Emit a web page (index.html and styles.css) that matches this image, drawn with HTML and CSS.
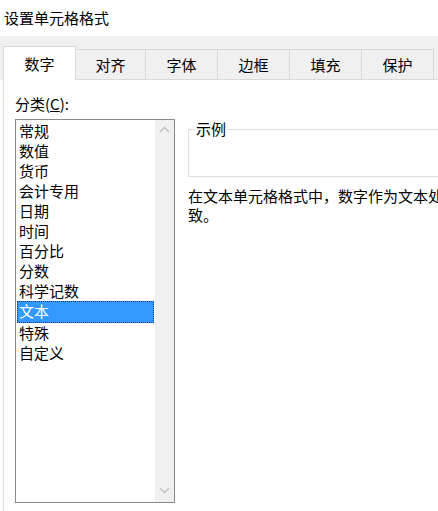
FILE: index.html
```html
<!DOCTYPE html>
<html lang="zh-CN">
<head>
	<meta charset="UTF-8">
	<meta name="viewport" content="width=device-width, initial-scale=1.0">
	<title>设置单元格格式</title>
	<link rel="stylesheet" href="styles.css">
</head>
<body>
	<div class="title-bar">设置单元格格式</div>
	<div class="tab-strip">
		<a href="#" class="tab selected">数字</a>
		<a href="#" class="tab">对齐</a>
		<a href="#" class="tab">字体</a>
		<a href="#" class="tab">边框</a>
		<a href="#" class="tab">填充</a>
		<a href="#" class="tab">保护</a>
		<div class="tab-rest"></div>
	</div>
	<div class="panel">
		<div class="col-left">
			<div class="label">分类(<u>C</u>):</div>
			<div class="listbox">
				<ul class="list-cat">
					<li class="item-cat">常规</li>
					<li class="item-cat">数值</li>
					<li class="item-cat">货币</li>
					<li class="item-cat">会计专用</li>
					<li class="item-cat">日期</li>
					<li class="item-cat">时间</li>
					<li class="item-cat">百分比</li>
					<li class="item-cat">分数</li>
					<li class="item-cat">科学记数</li>
					<li class="item-cat selected">文本</li>
					<li class="item-cat">特殊</li>
					<li class="item-cat">自定义</li>
				</ul>
				<div class="scrollbar">
					<svg class="arrow" width="11" height="7" viewBox="0 0 11 7"><polyline points="1,6 5.5,1.5 10,6" fill="none" stroke="#c4c4c4" stroke-width="1.6"/></svg>
					<svg class="arrow" width="11" height="7" viewBox="0 0 11 7"><polyline points="1,1 5.5,5.5 10,1" fill="none" stroke="#c4c4c4" stroke-width="1.6"/></svg>
				</div>
			</div>
		</div>
		<div class="col-right">
			<fieldset class="sample">
				<legend>示例</legend>
			</fieldset>
			<p class="desc">在文本单元格格式中，数字作为文本处理。单元格显示的内容与输入的内容完全一<br>致。</p>
		</div>
	</div>
</body>
</html>
```

FILE: styles.css
```css
html, body{ margin: 0; padding: 0; overflow: hidden; }
body{
	width: 438px; height: 511px; background: #fff; color: #000;
	font-family: "Noto Sans CJK SC", "Microsoft YaHei", sans-serif; font-size: 15px;
}
.title-bar{ height: 36px; line-height: 36px; padding-left: 4px; }

/* tabs */
.tab-strip{
	display: flex; align-items: flex-end; height: 44px; background: #f0f0f0;
	padding-left: 3px;
}
.tab{
	box-sizing: border-box; flex: none; height: 31px; line-height: 29px; text-align: center;
	border-top: 1px solid #d9d9d9; border-right: 1px solid #d9d9d9; border-bottom: 1px solid #d9d9d9;
	color: #000; text-decoration: none; width: 72px;
}
.tab:nth-child(2){ width: 70px; }
.tab.selected{
	width: 73px; height: 34px; line-height: 34px; background: #fff;
	border: 1px solid #d9d9d9; border-bottom: none;
}
.tab-rest{ flex: 1; border-bottom: 1px solid #d9d9d9; }

/* page body */
.panel{
	display: flex; gap: 13px; margin-left: 3px; border-left: 1px solid #d9d9d9;
	height: 431px; padding-left: 11px;
}
.col-left{ width: 160px; flex: none; }
.label{ height: 20px; line-height: 20px; margin-top: 14px; }
.listbox{
	box-sizing: border-box; display: flex; margin-top: 5px; height: 384px;
	border: 1px solid #8a8a8a; background: #fff;
}
.list-cat{ list-style: none; margin: 0; padding: 1px 1px 0 1px; flex: 1; }
.item-cat{ height: 20px; line-height: 20px; padding-left: 2px; }
.item-cat.selected{
	background: #3399ff; color: #fff; line-height: 18px;
	border: 1px dotted #1a3c66; padding-left: 1px;
}
.scrollbar{
	width: 19px; background: #f0f0f0; display: flex; flex-direction: column;
	justify-content: space-between; align-items: center; padding: 6px 0 8px;
}

.col-right{ width: 560px; flex: none; }
.sample{
	box-sizing: border-box; margin: 40px 0 0; padding: 0; height: 57px;
	border: 1px solid #dcdcdc; border-right: none;
}
.sample legend{ margin-left: 6px; padding: 0 1px; line-height: 18px; }
.desc{ margin: 9px 0 0; line-height: 19px; white-space: nowrap; }
```
